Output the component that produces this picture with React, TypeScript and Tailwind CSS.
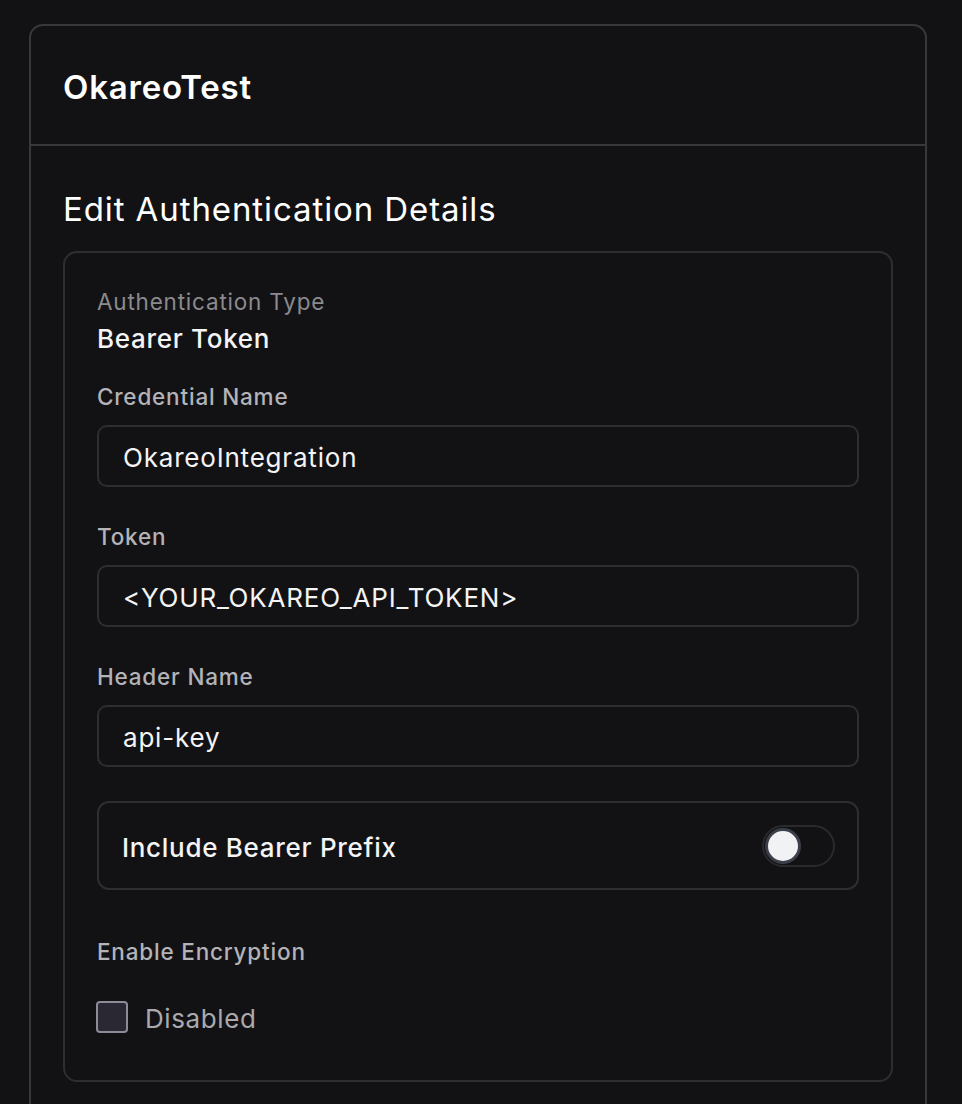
import React from 'react';

const font = { fontFamily: 'Inter, "Noto Sans", sans-serif' };

interface FieldProps {
  label: string;
  value: string;
}

const Field: React.FC<FieldProps> = ({ label, value }) => (
  <div className="flex flex-col">
    <label className="text-[22.5px] leading-[30px] tracking-[0.8px] font-medium text-[#b3b3b8]">{label}</label>
    <div className="mt-[13px] h-[62px] flex items-center rounded-[10px] border-2 border-[#2e2e32] bg-[#121214] pl-[24px]">
      <span className="pt-[4px] text-[26px] leading-[34px] tracking-[0.8px] text-[#f4f4f5]">{value}</span>
    </div>
  </div>
);

const App: React.FC = () => {
  return (
    <div className="min-h-[1104px] bg-[#121214] pl-[29px] pr-[35px] pt-[24px]" style={font}>
      <div className="rounded-t-[14px] border-2 border-b-0 border-[#38383c] bg-[#121214] min-h-[1080px]">
        {/* Header */}
        <div className="h-[120px] flex items-center px-[32px] pt-[4px] border-b-2 border-[#38383c]">
          <h2 className="text-[33px] leading-[40px] tracking-[0.8px] font-semibold text-white">OkareoTest</h2>
        </div>

        {/* Section */}
        <div className="px-[32px] pt-[43px]">
          <h3 className="text-[33px] leading-[40px] tracking-[0.9px] text-white">Edit Authentication Details</h3>

          <div className="mt-[22px] rounded-[14px] border-2 border-[#2e2e32] px-[32px] pt-[34px] pb-[47px]">
            <div className="flex flex-col">
              <span className="text-[22.5px] leading-[30px] tracking-[0.8px] text-[#8a8a8f]">Authentication Type</span>
              <span className="mt-[5px] text-[26px] leading-[34px] tracking-[0.7px] font-medium text-[#f4f4f5]">Bearer Token</span>
            </div>

            <div className="mt-[26px] flex flex-col gap-[35px]">
              <Field label="Credential Name" value="OkareoIntegration" />
              <Field label="Token" value="<YOUR_OKAREO_API_TOKEN>" />
              <Field label="Header Name" value="api-key" />
            </div>

            {/* Bearer prefix toggle */}
            <div className="mt-[34px] h-[89px] flex items-center justify-between rounded-[12px] border-2 border-[#2e2e32] pl-[23px] pr-[22px]">
              <span className="pt-[4px] text-[26px] leading-[34px] tracking-[0.7px] font-medium text-[#f4f4f5]">Include Bearer Prefix</span>
              <div className="w-[73px] h-[42px] rounded-full border-2 border-[#2a2a2e] bg-[#121214] flex items-center pl-[1px]">
                <div className="w-[36px] h-[36px] rounded-full bg-[#f1f2f4] border-[3px] border-[#3a3f4a]" />
              </div>
            </div>

            {/* Encryption */}
            <div className="mt-[47px] flex flex-col">
              <span className="text-[22.5px] leading-[30px] tracking-[0.8px] font-medium text-[#b3b3b8]">Enable Encryption</span>
              <div className="mt-[34px] h-[32px] flex items-center gap-[17px] -ml-[1px]">
                <div className="w-[32px] h-[32px] rounded-[4px] border-2 border-[#8d8b98] bg-[#2a2933]" />
                <span className="pt-[4px] text-[26px] leading-[28px] tracking-[0.6px] text-[#a9a9ae]">Disabled</span>
              </div>
            </div>
          </div>
        </div>
      </div>
    </div>
  );
};

export default App;
